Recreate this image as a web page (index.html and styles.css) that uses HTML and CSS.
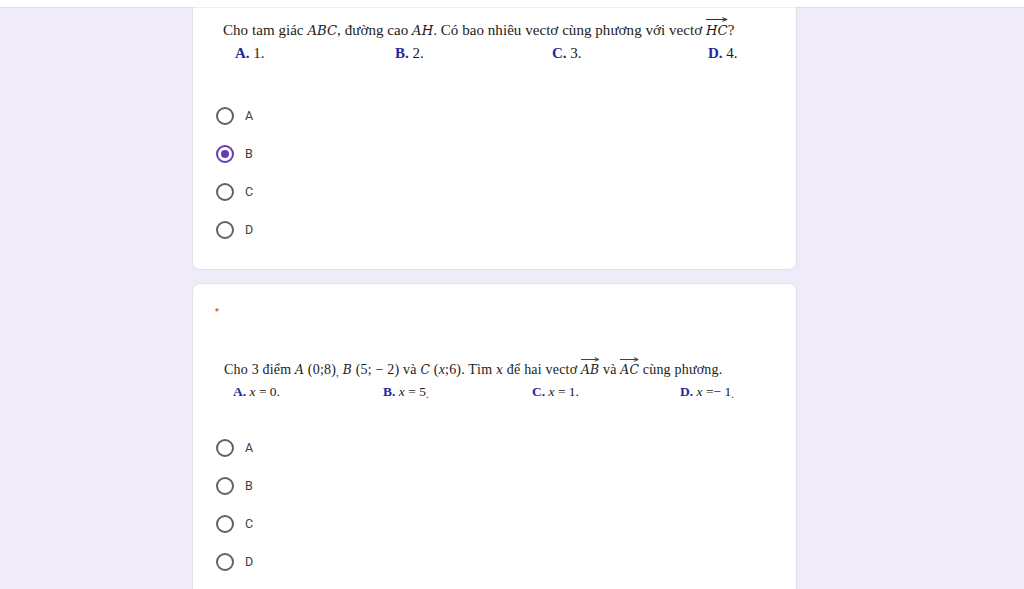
FILE: index.html
```html
<!DOCTYPE html>
<html lang="vi">
<head>
<meta charset="utf-8">
<title>Form</title>
<link rel="stylesheet" href="styles.css">
</head>
<body>
<div class="topbar"></div>
<main class="column">
  <section class="card card-first">
    <div class="q q1">
      <p class="line">Cho tam giác <i class="m">ABC</i>, đường cao <i class="m">AH</i>. Có bao nhiêu vectơ cùng phương với vectơ <span class="vec"><i class="m">HC</i><svg class="arrow" viewBox="0 0 20 5" preserveAspectRatio="none"><path d="M0 2.5H18" stroke="#222" stroke-width="0.9" fill="none"/><path d="M15 0.6L19.5 2.5L15 4.4" stroke="#222" stroke-width="0.9" fill="none"/></svg></span>?</p>
      <div class="answers a1">
        <span><b>A.</b> 1.</span>
        <span><b>B.</b> 2.</span>
        <span><b>C.</b> 3.</span>
        <span><b>D.</b> 4.</span>
      </div>
    </div>
    <ul class="options">
      <li class="opt"><span class="radio"></span><span class="lbl">A</span></li>
      <li class="opt"><span class="radio on"></span><span class="lbl">B</span></li>
      <li class="opt"><span class="radio"></span><span class="lbl">C</span></li>
      <li class="opt"><span class="radio"></span><span class="lbl">D</span></li>
    </ul>
  </section>

  <section class="card card-second">
    <div class="req">*</div>
    <div class="q q2">
      <p class="line">Cho 3 điểm <i class="m">A</i> (0;8)<sub>,</sub> <i class="m">B</i> (5; − 2) và <i class="m">C</i> (<i>x</i>;6). Tìm <i class="m">x</i> để hai vectơ <span class="vec"><i class="m">AB</i><svg class="arrow" viewBox="0 0 20 5" preserveAspectRatio="none"><path d="M0 2.5H18" stroke="#222" stroke-width="0.9" fill="none"/><path d="M15 0.6L19.5 2.5L15 4.4" stroke="#222" stroke-width="0.9" fill="none"/></svg></span> và <span class="vec"><i class="m">AC</i><svg class="arrow" viewBox="0 0 20 5" preserveAspectRatio="none"><path d="M0 2.5H18" stroke="#222" stroke-width="0.9" fill="none"/><path d="M15 0.6L19.5 2.5L15 4.4" stroke="#222" stroke-width="0.9" fill="none"/></svg></span> cùng phương.</p>
      <div class="answers a2">
        <span><b>A.</b> <i>x</i> = 0.</span>
        <span><b>B.</b> <i>x</i> = 5<sub>.</sub></span>
        <span><b>C.</b> <i>x</i> = 1.</span>
        <span><b>D.</b> <i>x</i> =− 1<sub>.</sub></span>
      </div>
    </div>
    <ul class="options">
      <li class="opt"><span class="radio"></span><span class="lbl">A</span></li>
      <li class="opt"><span class="radio"></span><span class="lbl">B</span></li>
      <li class="opt"><span class="radio"></span><span class="lbl">C</span></li>
      <li class="opt"><span class="radio"></span><span class="lbl">D</span></li>
    </ul>
  </section>
</main>
</body>
</html>
```

FILE: styles.css
```css
* { box-sizing: border-box; }
html, body {
  margin: 0;
  padding: 0;
  height: 589px;
  overflow: hidden;
  background: #efebf8;
  font-family: Roboto, "Liberation Sans", Arial, sans-serif;
}
.topbar {
  height: 7px;
  background: #ffffff;
  box-shadow: 0 1px 1px rgba(0,0,0,0.06);
  position: relative;
  z-index: 1;
}
.column {
  width: 605px;
  margin-left: 192px;
  display: flex;
  flex-direction: column;
  gap: 13px;
}
.card {
  background: #ffffff;
  border: 1px solid #e3e0ea;
  border-radius: 8px;
}
.card-first {
  border-top: none;
  border-radius: 0 0 8px 8px;
  padding: 12px 0 22px 0;
  height: 263px;
}
.card-second {
  padding: 21px 0 20px 0;
}
.q {
  font-family: "Liberation Serif", "Times New Roman", serif;
  color: #1b1b1b;
}
.q1 { padding-left: 30px; font-size: 15px; letter-spacing: 0.05px; }
.q2 { padding-left: 31px; font-size: 14px; margin-top: 40px; letter-spacing: 0.2px; }
.line {
  margin: 0;
  line-height: 22px;
  white-space: nowrap;
}
.m {
  font-family: "DejaVu Serif", "Liberation Serif", serif;
  font-style: italic;
  font-size: 0.88em;
}
.vec {
  position: relative;
  display: inline-block;
}
.arrow {
  position: absolute;
  left: 0;
  right: 0;
  top: -2px;
  width: 100%;
  height: 5px;
}
sub { font-size: 0.8em; vertical-align: -2px; line-height: 0; }
.answers {
  display: flex;
  line-height: 22px;
  white-space: nowrap;
  letter-spacing: 0;
}
.answers b { color: #1f2a9c; font-weight: bold; }
.a1 { padding-left: 12px; }
.a1 span:nth-child(1) { width: 160px; }
.a1 span:nth-child(2) { width: 157px; }
.a1 span:nth-child(3) { width: 156px; }
.a2 { padding-left: 9px; font-size: 13.5px; }
.a2 span:nth-child(1) { width: 150px; }
.a2 span:nth-child(2) { width: 149px; }
.a2 span:nth-child(3) { width: 148px; }
.options {
  list-style: none;
  margin: 33px 0 0 0;
  padding: 0 0 0 23px;
}
.card-second .options { margin-top: 26px; }
.opt {
  height: 38px;
  display: flex;
  align-items: center;
  gap: 11px;
}
.radio {
  width: 18px;
  height: 18px;
  border: 2px solid #5f6368;
  border-radius: 50%;
  display: flex;
  align-items: center;
  justify-content: center;
  flex: none;
}
.radio.on { border-color: #673ab7; }
.radio.on::after {
  content: "";
  width: 8px;
  height: 8px;
  border-radius: 50%;
  background: #673ab7;
}
.lbl {
  font-size: 12.5px;
  color: #3c4043;
  line-height: 1;
}
.req {
  padding-left: 22px;
  color: #d93025;
  font-size: 9px;
  line-height: 14px;
}
```
